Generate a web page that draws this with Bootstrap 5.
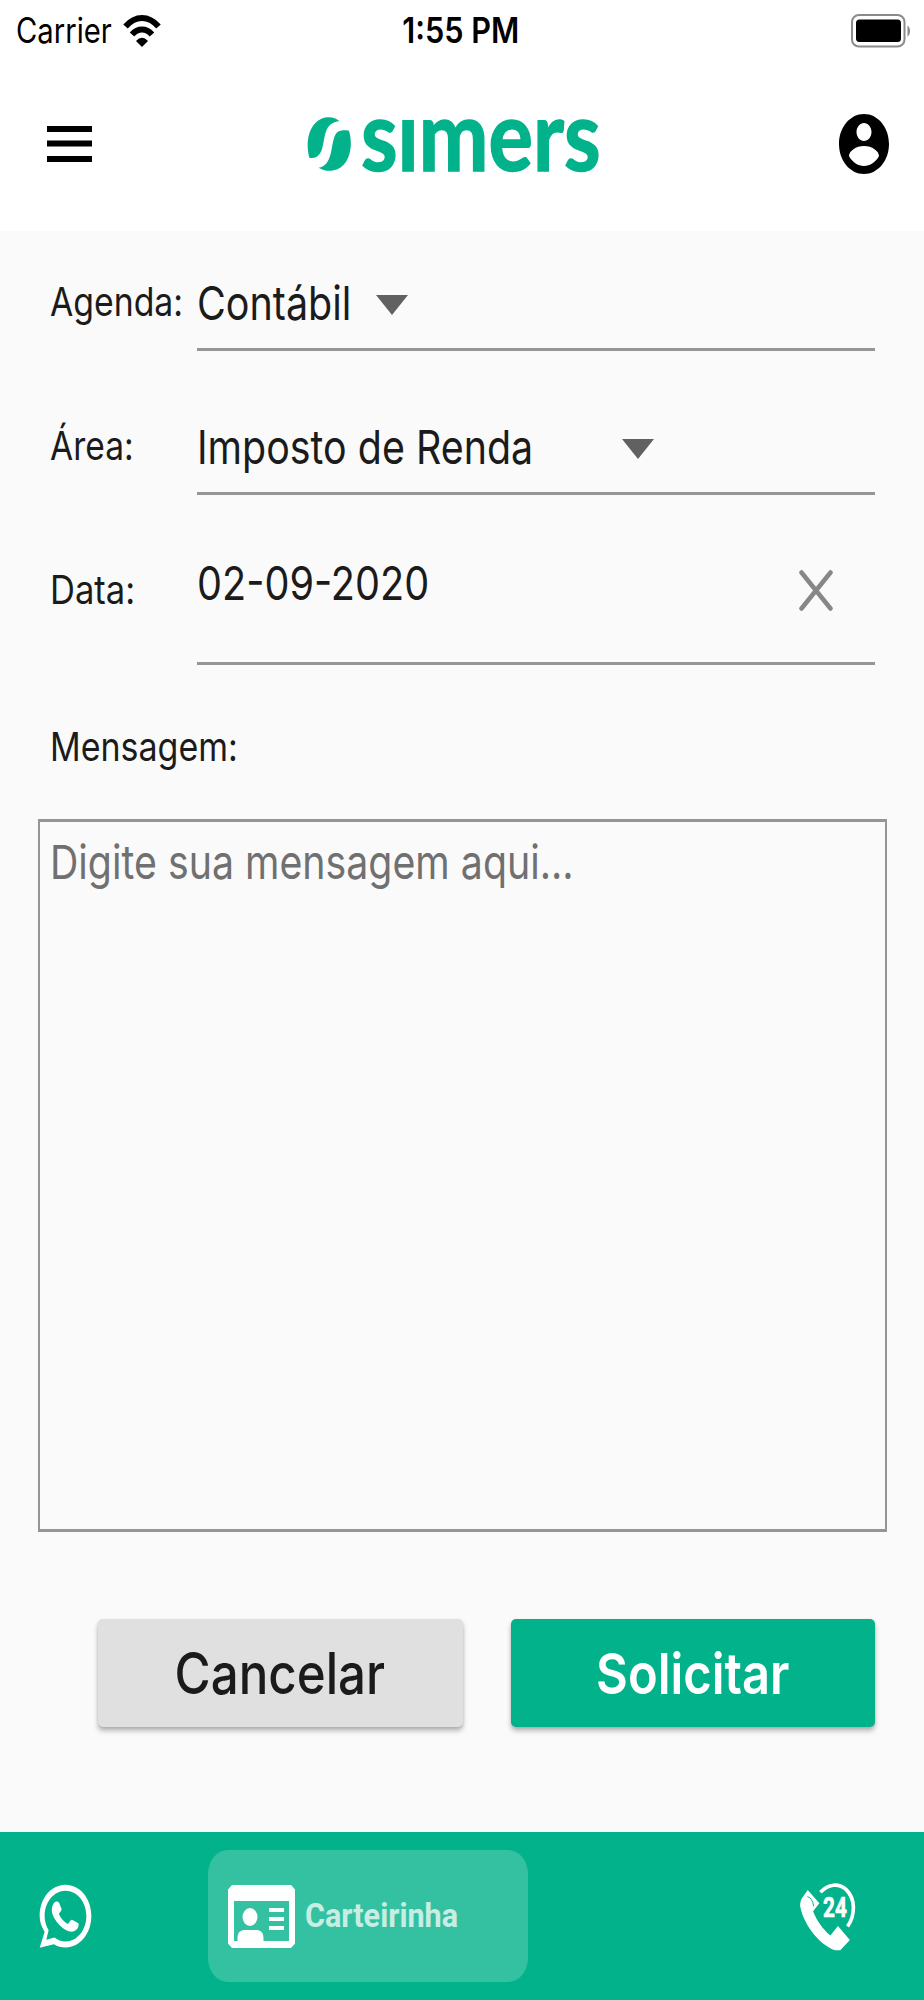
<!DOCTYPE html>
<html lang="pt-BR">
<head>
<meta charset="utf-8">
<meta name="viewport" content="width=device-width, initial-scale=1">
<title>Simers</title>
<link href="https://cdn.jsdelivr.net/npm/bootstrap@5.3.0/dist/css/bootstrap.min.css" rel="stylesheet">
<style>
  :root { --brand: #02b28b; --line: #959595; --ink: #1b1b1b; }
  body { font-family: Inter, "Liberation Sans", sans-serif; background: #fafafa; color: var(--ink); height: 2000px; width: 924px; overflow: hidden; }
  svg { display: block; flex: none; }
  /* condensed lettering */
  .cond { display: inline-block; white-space: nowrap; transform: scaleX(var(--sx, .85)); transform-origin: 0 50%; }
  .cond-mid { transform-origin: 50% 50%; }

  .status-row { height: 61px; font-size: 35px; line-height: 61px; color: #000; padding: 0 13px 0 16px; }
  .status-row > div { width: 33.333%; }
  .carrier { --sx: .835; width: 107px; }
  .clock { --sx: .875; font-weight: 600; margin-right: 5px; }

  .top-row { height: 170px; padding: 0 35px 0 47px; }
  .brand-word { --sx: .85; font: 700 98px/100px Lato, sans-serif; color: var(--brand); -webkit-text-stroke: 1.5px var(--brand); height: 100px; width: 240px; margin-top: 2px; clip-path: inset(34px -60px 0 0); }
  .brand { margin-left: 214px; height: 100px; margin-top: -28px; }

  .form-area { padding: 26px 49px 0 50px; }
  .field-row { margin-bottom: 50px; }
  .field-name { font-size: 39.5px; line-height: 48px; width: 147px; flex: none; }
  .field-row .field-name { margin-bottom: 4px; }
  .field-box { height: 94px; border-bottom: 3px solid var(--line); font-size: 47px; }
  .field-box .cond { margin-top: 2px; }
  .field-date { height: 120px; padding-bottom: 26px; }

  .message-box { margin: 0 37px 0 38px; height: 713px; padding: 14px 9.500px; border: solid var(--line); border-width: 3px 2px; border-radius: 0; background: #fafafa; font-size: 47px; line-height: 52px; color: #707070; }

  .actions { padding: 87px 49px 0 98px; gap: 48px; }
  .action-btn { height: 108px; border: 0; border-radius: 5px; font-size: 57px; line-height: 110px; padding: 0; flex: 1 1 0; box-shadow: 0 4px 5px rgba(0,0,0,.26), 0 1px 3px rgba(0,0,0,.1); }
  .action-cancel { --sx: .864; background: #e0e0e0; color: var(--ink); font-weight: 500; }
  .action-send { --sx: .857; background: var(--brand); color: #fff; font-weight: 600; }

  .bottom-bar { height: 168px; margin-top: 105px; background: var(--brand); padding: 0 66px 0 39px; }
  .card-pill { margin-left: 116px; width: 320px; height: 132px; border-radius: 20px/24px; background: rgba(255,255,255,.2); padding-left: 20px; }
  .card-pill span { --sx: .926; font: 700 33px/40px Roboto, sans-serif; color: #c8eee4; margin: 0 0 1px 9.500px; }
</style>
</head>
<body>
<header class="bg-white">
  <div class="status-row d-flex align-items-center">
    <div class="d-flex align-items-center">
      <span class="cond carrier">Carrier</span>
      <svg width="38" height="34" viewBox="0 0 38 34"><g fill="none" stroke="#000" stroke-width="6"><path d="M2.500 12.500Q10 4 19 4T35.500 12.500"/><path d="M9 20.500Q13.500 15.500 19 15.500T29 20.500"/></g><path d="M13 27Q19 20.500 25 27L19 33Z"/></svg>
    </div>
    <div class="text-center"><span class="cond cond-mid clock">1:55 PM</span></div>
    <div class="d-flex justify-content-end">
      <svg width="60" height="36" viewBox="0 0 60 36"><rect x="1" y="2" width="52.500" height="31.500" rx="7" fill="none" stroke="#8b8b8b" stroke-width="2"/><rect x="5" y="6.500" width="45" height="22.500" rx="3.500"/><path d="M56.500 12.500Q59 14 59 18T56.500 23.500Z" fill="#8b8b8b"/></svg>
    </div>
  </div>
  <div class="top-row d-flex align-items-start pt-5">
    <svg class="mt-3" width="45" height="38" viewBox="0 0 45 38"><path d="M0 1h45v6H0zM0 15.500h45v6H0zM0 31h45v6H0z"/></svg>
    <div class="brand d-flex align-items-start">
      <svg style="margin-top:35px" width="47" height="56" viewBox="50 47 141 168" fill="#02b28b"><path d="M150 62C138 50 116 47 96 55C62 70 46 118 60 172C78 176 91 168 98 146C104 126 104 105 112 88C120 72 132 65 150 62Z"/><path d="M162 90C171 89 176 90 179 91C193 140 180 190 146 206C126 215 103 212 88 202C107 199 118 184 124 160C131 132 131 112 141 99C147 92 154 91 162 90Z"/></svg>
      <span class="cond brand-word ms-2">simers</span>
    </div>
    <svg class="ms-auto" style="margin-top:5px" width="50" height="60" viewBox="0 0 50 60"><path fill-rule="evenodd" d="M25 0C39 0 50 13.500 50 30S39 60 25 60S0 46.500 0 30S11 0 25 0ZM25 9C21 9 17.500 13 17.500 18S21 27 25 27S32.500 23 32.500 18S29 9 25 9ZM25 32C17 32 10 37 10 42C13 48 19 52 25 52S37 48 40 42C40 37 33 32 25 32Z"/></svg>
  </div>
</header>

<main>
  <div class="form-area">
    <div class="field-row d-flex align-items-center">
      <label class="field-name"><span class="cond" style="--sx:.855">Agenda:</span></label>
      <div class="field-box flex-grow-1 d-flex align-items-center">
        <span class="cond" style="--sx:.84;width:179px">Contábil</span>
        <svg class="mt-1" width="32" height="20" viewBox="0 0 32 20"><path d="M0 0h32L16 20Z" fill="#616161"/></svg>
      </div>
    </div>
    <div class="field-row d-flex align-items-center">
      <label class="field-name"><span class="cond" style="--sx:.85">Área:</span></label>
      <div class="field-box flex-grow-1 d-flex align-items-center">
        <span class="cond" style="--sx:.838;width:425px">Imposto de Renda</span>
        <svg class="mt-1" width="32" height="20" viewBox="0 0 32 20"><path d="M0 0h32L16 20Z" fill="#616161"/></svg>
      </div>
    </div>
    <div class="d-flex align-items-start">
      <label class="field-name" style="margin-top:21px"><span class="cond" style="--sx:.875">Data:</span></label>
      <div class="field-box field-date flex-grow-1 d-flex align-items-center">
        <span class="cond mb-3" style="--sx:.843;width:602px">02-09-2020</span>
        <svg width="34" height="41" viewBox="0 0 34 41"><path d="M2.500 2.500L31.500 38.500M31.500 2.500L2.500 38.500" stroke="#878787" stroke-width="4.500" stroke-linecap="round"/></svg>
      </div>
    </div>
    <label class="field-name d-block" style="margin:58px 0 48px"><span class="cond" style="--sx:.86">Mensagem:</span></label>
  </div>
  <div class="message-box"><span class="cond" style="--sx:.836">Digite sua mensagem aqui...</span></div>
  <div class="actions d-flex">
    <button class="btn action-btn action-cancel" type="button"><span class="cond cond-mid">Cancelar</span></button>
    <button class="btn action-btn action-send" type="button"><span class="cond cond-mid">Solicitar</span></button>
  </div>
</main>

<footer class="bottom-bar d-flex align-items-center">
  <svg width="53" height="64" viewBox="117 190 160 192" fill="#fff"><path fill-rule="evenodd" d="M119 382L134 334C124 316 119 304 119 286C119 234 153 192 197 192S275 234 275 286S241 381 197 381C184 381 173 378 162 371ZM139 358L164 351C174 359 185 363 197 363C232 363 260 328 260 286S232 210 197 210S134 245 134 286C134 302 138 315 146 329Z"/><path d="M170 242C176 241 178 246 180 252L185 265C186 271 178 276 177 280C183 294 193 305 204 310C208 308 211 297 216 297C222 299 231 305 236 308C239 317 232 330 220 333C206 336 187 324 174 308C162 293 154 279 156 262C158 250 163 243 170 242Z"/></svg>
  <div class="card-pill d-flex align-items-center">
    <svg width="67" height="63" viewBox="0 0 67 63" fill="#fff"><path fill-rule="evenodd" d="M4 0H63L67 4.500V58.500L63 63H4L0 58.500V4.500ZM6 16V56H9.500V53C9.500 47 13 45 17 45H28C32 45 35.500 47 35.500 53V56H61V16Z"/><ellipse cx="22" cy="32" rx="7.500" ry="9"/><path d="M41 23h15v4H41zM41 32h15v4H41zM41 41h15v4H41z"/></svg>
    <span class="cond">Carteirinha</span>
  </div>
  <svg class="ms-auto" width="60" height="73" viewBox="115 120 180 220" fill="#fff"><path d="M144 150L179 190L160 214C170 240 188 267 212 287L235 259L271 301L242 332H226C175 312 130 250 121 198C121 184 125 175 131 168Z"/><path d="M143 170Q158 174 162 199" fill="none" stroke="#02b28b" stroke-width="3"/><path d="M182 157C206 132 236 128 260 149C288 177 288 225 264 260" fill="none" stroke="#fff" stroke-width="11"/><text x="190" y="231" font-family="Roboto, sans-serif" font-weight="700" font-size="84" textLength="72" lengthAdjust="spacingAndGlyphs" stroke="#fff" stroke-width="2">24</text></svg>
</footer>
<script src="https://cdn.jsdelivr.net/npm/bootstrap@5.3.0/dist/js/bootstrap.bundle.min.js"></script>
</body>
</html>
